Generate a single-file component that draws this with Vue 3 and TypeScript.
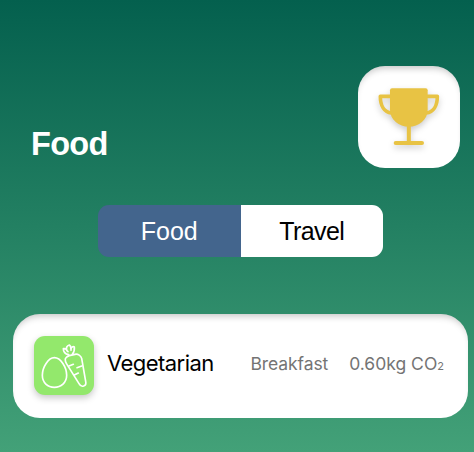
<script setup lang="ts">
import { ref } from 'vue'

interface Entry {
  name: string
  meal: string
  amount: string
}

const tabs: string[] = ['Food', 'Travel']
const active = ref<string>('Food')
const entries: Entry[] = [{ name: 'Vegetarian', meal: 'Breakfast', amount: '0.60kg' }]
</script>

<template>
  <main class="screen">
    <header class="header">
      <h1 class="title">{{ active }}</h1>
      <button class="trophy" aria-label="Achievements">
        <svg viewBox="0 0 306 306" fill="none" stroke="#e8c344" stroke-linecap="round" stroke-linejoin="round">
          <path d="M96 91H67C67 120 79 139 100 141M209 91H238C238 120 226 139 205 141" stroke-width="11" />
          <path d="M102 67H203Q209 67 209 73V131C209 161 182 182 152.500 182S96 161 96 131V73Q96 67 102 67Z" fill="#e8c344" stroke="none" />
          <path d="M152.500 177V231M113 231H192" stroke-width="12" />
        </svg>
      </button>
    </header>

    <nav class="tabs">
      <button
        v-for="tab in tabs"
        :key="tab"
        class="tab"
        :class="{ selected: tab === active }"
        @click="active = tab"
      >{{ tab }}</button>
    </nav>

    <section v-for="entry in entries" :key="entry.name" class="card">
      <span class="tile">
        <svg viewBox="0 0 180 177" fill="none" stroke="#fff" stroke-width="5" stroke-linecap="round" stroke-linejoin="round">
          <path d="M61 65C43 65 25 94 25 118C25 140 41 154 61 154S98 140 98 118C98 94 80 65 61 65Z" />
          <path d="M94 73C92 67 99 61 106 59L123 55C132 53 141 59 143 67L155 136C157 144 155 148 149 150C143 152 138 149 135 143L97 82Q94 78 94 73Z" />
          <path d="M104 56C95 54 88 48 88 38Q94 37 98 41C96 34 100 29 106 27Q110 30 111 37Q116 30 121 33C122 42 119 50 115 55" />
          <path d="M98 43L102 47M111 36V43M105 90L118 85M129 95L143 90M121 117L133 111" />
        </svg>
      </span>
      <span class="name">{{ entry.name }}</span>
      <span class="meal">{{ entry.meal }}</span>
      <span class="amount">{{ entry.amount }} CO<small>2</small></span>
    </section>
  </main>
</template>

<style>
body { margin: 0; }
</style>

<style scoped>
.screen {
  box-sizing: border-box;
  width: 474px;
  height: 452px;
  padding: 65.500px 6px 0 13px;
  overflow: hidden;
  background: linear-gradient(#04604e, #238062 50%, #43a178);
  font-family: Inter, "Liberation Sans", sans-serif;
}
button {
  border: 0;
  padding: 0;
  margin: 0;
}
.header {
  display: flex;
  justify-content: space-between;
  height: 102px;
  padding: 0 8px 0 18px;
}
.title {
  margin: 60px 0 0;
  font: bold 32.500px/36px "Liberation Sans", sans-serif;
  letter-spacing: -0.700px;
  color: #fff;
}
.trophy {
  width: 102px;
  height: 102px;
  border-radius: 27px;
  background: #fff;
  box-shadow: inset 0 6px 7px -4px rgba(0, 0, 0, 0.24);
}
.trophy svg {
  display: block;
  width: 102px;
  height: 102px;
  filter: drop-shadow(0 3px 3px rgba(0, 0, 0, 0.2));
}
.tabs {
  display: flex;
  width: 285px;
  height: 52px;
  margin: 37.500px 0 0 85px;
  border-radius: 11px;
  overflow: hidden;
}
.tab {
  flex: 1;
  background: #fff;
  color: #000;
  font: 25px/52px "Liberation Sans", sans-serif;
  letter-spacing: -0.600px;
}
.tab.selected {
  background: #43658d;
  color: #fff;
  letter-spacing: 0;
}
.card {
  box-sizing: border-box;
  display: flex;
  align-items: center;
  height: 104px;
  margin-top: 56.500px;
  padding: 0 24px 0 21px;
  border-radius: 27px;
  background: #fff;
  box-shadow: inset 0 6px 7px -4px rgba(0, 0, 0, 0.24);
  white-space: nowrap;
}
.tile {
  width: 60px;
  height: 59px;
  border-radius: 11px;
  background: #93e86c;
  box-shadow: 0 3px 7px rgba(0, 0, 0, 0.22);
}
.tile svg {
  display: block;
  width: 60px;
  height: 59px;
}
.name {
  margin-left: 13px;
  padding-bottom: 5px;
  font-size: 22px;
  letter-spacing: -0.550px;
}
.meal {
  margin-left: auto;
  padding-bottom: 4px;
  font-size: 17.500px;
  letter-spacing: -0.100px;
  color: #747474;
}
.amount {
  margin-left: 21px;
  padding-bottom: 4px;
  font-size: 17.500px;
  color: #747474;
}
.amount small {
  font-size: 11px;
}
</style>
